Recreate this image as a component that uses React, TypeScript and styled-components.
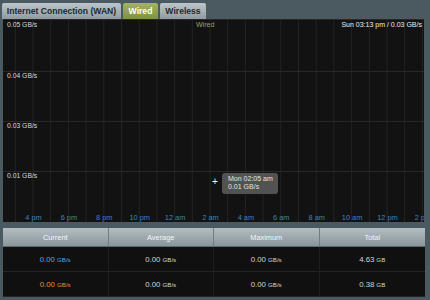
import { createGlobalStyle, styled } from "styled-components";

const GlobalStyle = createGlobalStyle`
  html, body {
    margin: 0;
    background: #4b5960;
  }
  * {
    box-sizing: border-box;
  }
`;

const Page = styled.div`
  width: 430px;
  height: 300px;
  padding: 3px 0 0 2px;
  background: #4b5960;
  font-family: "Liberation Sans", Arial, sans-serif;
  overflow: hidden;
`;

const TabBar = styled.div`
  display: flex;
  gap: 2px;
  height: 16px;
`;

const Tab = styled.div<{ $active?: boolean; $w: number }>`
  width: ${(p) => p.$w}px;
  display: flex;
  align-items: center;
  justify-content: center;
  border-radius: 2px 2px 0 0;
  font-size: 8.6px;
  font-weight: 700;
  color: ${(p) => (p.$active ? "#ffffff" : "#1d282d")};
  background: ${(p) =>
    p.$active
      ? "linear-gradient(#a2b462, #7f9240)"
      : "linear-gradient(#bcc6ca, #8f9ba0)"};
`;

const Chart = styled.div`
  position: relative;
  margin-left: 1px;
  width: 421px;
  height: 203px;
  background: #121212;
  overflow: hidden;
  font-size: 6.8px;
  color: #d8d8d8;
`;

const Grid = styled.svg`
  position: absolute;
  inset: 0;
`;

const AxisLabel = styled.span<{ $top: number }>`
  position: absolute;
  left: 4px;
  top: ${(p) => p.$top}px;
  white-space: nowrap;
`;

const TimeLabel = styled.span`
  position: absolute;
  top: 194px;
  transform: translateX(-50%);
  font-size: 7.4px;
  color: #3f82bd;
  white-space: nowrap;
`;

const SeriesName = styled.span`
  position: absolute;
  top: 2px;
  left: 193px;
  font-size: 7px;
  color: #98a85c;
`;

const HoverInfo = styled.span`
  position: absolute;
  top: 2px;
  right: 2px;
  font-size: 7px;
  color: #f0f0f0;
  white-space: nowrap;
`;

const Cross = styled.span`
  position: absolute;
  left: 209px;
  top: 158px;
  font-size: 10px;
  line-height: 10px;
  color: #ffffff;
`;

const Tooltip = styled.div`
  position: absolute;
  left: 219px;
  top: 154px;
  width: 56px;
  height: 21px;
  padding: 2px 0 0 6px;
  border-radius: 3px;
  background: rgba(88, 88, 88, 0.92);
  color: #e4e4e4;
  font-size: 7px;
  line-height: 8px;
`;

const Table = styled.div`
  margin: 6px 0 0 1px;
  width: 422px;
  background: #101010;
`;

const Row = styled.div<{ $head?: boolean }>`
  display: grid;
  grid-template-columns: repeat(4, 1fr);
  height: ${(p) => (p.$head ? 19 : 25)}px;
  background: ${(p) => (p.$head ? "linear-gradient(#b3bdc2, #8a969b)" : "#101010")};
  border-bottom: 1px solid ${(p) => (p.$head ? "#5d6a70" : "#242424")};
`;

const Cell = styled.div<{ $head?: boolean; $color?: string }>`
  display: flex;
  align-items: center;
  justify-content: center;
  gap: 2px;
  font-size: ${(p) => (p.$head ? 7.4 : 7.8)}px;
  color: ${(p) => p.$color ?? (p.$head ? "#f4f6f7" : "#d4d4d4")};
  border-right: 1px solid ${(p) => (p.$head ? "#6f7c82" : "#1e1e1e")};
  &:last-child {
    border-right: none;
  }
`;

const Unit = styled.span`
  font-size: 6.2px;
`;

const xLines = Array.from({ length: 24 }, (_, i) => 12.3 + 17.7 * i);
const yLines = [0, 52, 102, 152];
const times = [
  "4 pm", "6 pm", "8 pm", "10 pm", "12 am", "2 am",
  "4 am", "6 am", "8 am", "10 am", "12 pm", "2 pm",
];

const rows = [
  { color: "#44aee8", cur: "0.00", avg: "0.00", max: "0.00", total: "4.63" },
  { color: "#e6913a", cur: "0.00", avg: "0.00", max: "0.00", total: "0.38" },
];

function Value({ n, unit, color }: { n: string; unit: string; color?: string }) {
  return (
    <Cell $color={color}>
      {n}
      <Unit>{unit}</Unit>
    </Cell>
  );
}

export default function App() {
  return (
    <>
      <GlobalStyle />
      <Page>
        <TabBar>
          <Tab $w={119}>Internet Connection (WAN)</Tab>
          <Tab $w={35} $active>
            Wired
          </Tab>
          <Tab $w={46}>Wireless</Tab>
        </TabBar>

        <Chart>
          <Grid width="421" height="203">
            {xLines.map((x) => (
              <line key={x} x1={x} x2={x} y1={0} y2={203} stroke="#232323" strokeWidth="1" />
            ))}
            {yLines.map((y) => (
              <line key={y} x1={0} x2={421} y1={y + 0.5} y2={y + 0.5} stroke="#282828" strokeWidth="1" />
            ))}
          </Grid>
          <AxisLabel $top={2}>0.05 GB/s</AxisLabel>
          <AxisLabel $top={53}>0.04 GB/s</AxisLabel>
          <AxisLabel $top={103}>0.03 GB/s</AxisLabel>
          <AxisLabel $top={153}>0.01 GB/s</AxisLabel>
          <SeriesName>Wired</SeriesName>
          <HoverInfo>Sun 03:13 pm / 0.03 GB/s</HoverInfo>
          {times.map((t, i) => (
            <TimeLabel key={t + i} style={{ left: 30.5 + 35.4 * i }}>
              {t}
            </TimeLabel>
          ))}
          <Cross>+</Cross>
          <Tooltip>
            Mon 02:05 am
            <br />
            0.01 GB/s
          </Tooltip>
        </Chart>

        <Table>
          <Row $head>
            <Cell $head>Current</Cell>
            <Cell $head>Average</Cell>
            <Cell $head>Maximum</Cell>
            <Cell $head>Total</Cell>
          </Row>
          {rows.map((r) => (
            <Row key={r.color}>
              <Value n={r.cur} unit="GB/s" color={r.color} />
              <Value n={r.avg} unit="GB/s" />
              <Value n={r.max} unit="GB/s" />
              <Value n={r.total} unit="GB" />
            </Row>
          ))}
        </Table>
      </Page>
    </>
  );
}
